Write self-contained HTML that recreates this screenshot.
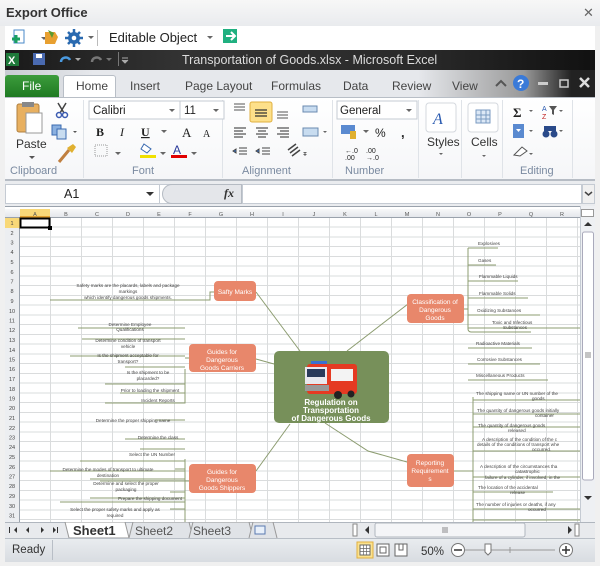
<!DOCTYPE html>
<html><head><style>
*{margin:0;padding:0;box-sizing:border-box}
body{width:600px;height:566px;overflow:hidden;background:#f0f0f0;font-family:"Liberation Sans",sans-serif;position:relative}
.a{position:absolute}
.t{position:absolute;white-space:nowrap}
.lbl{position:absolute;top:165px;font-size:11px;color:#7a8aa0}
.sep{position:absolute;top:100px;width:1px;height:78px;background:#dfe3e8}
.dd{position:absolute;font-size:7px;color:#555}
</style></head><body>
<!-- Export Office title -->
<div class="a" style="left:0;top:0;width:600px;height:26px;background:linear-gradient(#f7f7f7,#e9ebee)"></div>
<div class="t" style="left:6px;top:5px;font-size:13px;font-weight:bold;color:#333">Export Office</div>
<div class="t" style="left:583px;top:5px;font-size:13px;color:#666">✕</div>
<!-- toolbar -->
<div class="a" style="left:5px;top:26px;width:590px;height:24px;background:#fff"></div>
<svg class="a" style="left:10px;top:27px" width="230" height="22">
<rect x="4" y="3" width="10" height="13" fill="#fff" stroke="#4a8ac8"/><path d="M2 12h8M6 8v8" stroke="#1aa060" stroke-width="3"/>
<path d="M31 10l3 3 3-3" fill="#666"/>
<path d="M35 5h10l3 5-3 7h-10z" fill="#e8a030"/><path d="M38 3l6 3-2 5" fill="#5a9a30"/>
<circle cx="64" cy="11" r="6" fill="#2a6ab0"/><circle cx="64" cy="11" r="2.3" fill="#fff"/><path d="M64 2v18M55 11h18M58 5l12 12M70 5L58 17" stroke="#2a6ab0" stroke-width="2.5"/><circle cx="64" cy="11" r="2.3" fill="#fff"/>
<path d="M78 9l3 3 3-3" fill="#666"/><rect x="87" y="3" width="1" height="16" fill="#bbb"/>
<path d="M197 9l3 3 3-3" fill="#666"/>
<rect x="213" y="2" width="14" height="14" fill="#20b080"/><path d="M216 9h8M221 5l4 4-4 4" stroke="#fff" stroke-width="2" fill="none"/>
</svg>
<div class="t" style="left:109px;top:30px;font-size:13px;color:#222">Editable Object</div>
<!-- excel title -->
<div class="a" style="left:5px;top:50px;width:590px;height:20px;background:linear-gradient(90deg,#1a1a1a,#333 30%,#2a2a2a 70%,#111)"></div>
<svg class="a" style="left:6px;top:52px" width="130" height="16">
<rect x="0" y="1" width="13" height="13" fill="#1e7a3a"/><text x="2" y="12" font-size="11" font-weight="bold" fill="#fff" font-family="Liberation Sans">X</text>
<rect x="27" y="1" width="12" height="12" fill="#4a6ab0"/><rect x="30" y="2" width="6" height="4" fill="#fff"/>
<path d="M55 10c0-5 7-6 9-2" stroke="#4a9ae0" stroke-width="2.5" fill="none"/><path d="M69 6l3 3 3-3" fill="#aaa"/>
<path d="M86 10c0-5 7-6 9-2" stroke="#777" stroke-width="2.5" fill="none"/><path d="M100 6l3 3 3-3" fill="#777"/>
<rect x="112" y="0" width="1" height="14" fill="#777"/><path d="M116 6h6M116 8l3 3 3-3" stroke="#aaa" fill="#aaa"/>
</svg>
<div class="t" style="left:182px;top:53px;font-size:12.5px;color:#ddd">Transportation of Goods.xlsx  -  Microsoft Excel</div>
<!-- tabs row -->
<div class="a" style="left:5px;top:70px;width:590px;height:27px;background:linear-gradient(90deg,#c8ccd2,#e6e8ec 15%,#e6e8ec 70%,#999 88%,#222 96%)"></div>
<div class="a" style="left:5px;top:75px;width:54px;height:22px;background:linear-gradient(#3c9c3c,#1f7a22);border-radius:3px 3px 0 0"></div>
<div class="t" style="left:22px;top:79px;font-size:12px;color:#fff">File</div>
<div class="a" style="left:63px;top:75px;width:53px;height:23px;background:#fff;border:1px solid #b8bec6;border-bottom:none;border-radius:3px 3px 0 0"></div>
<div class="t" style="left:76px;top:79px;font-size:12px;color:#444">Home</div>
<div class="t" style="left:130px;top:79px;font-size:12px;color:#444">Insert</div>
<div class="t" style="left:185px;top:79px;font-size:12px;color:#444">Page Layout</div>
<div class="t" style="left:271px;top:79px;font-size:12px;color:#444">Formulas</div>
<div class="t" style="left:343px;top:79px;font-size:12px;color:#444">Data</div>
<div class="t" style="left:392px;top:79px;font-size:12px;color:#444">Review</div>
<div class="t" style="left:452px;top:79px;font-size:12px;color:#444">View</div>
<svg class="a" style="left:494px;top:74px" width="100" height="20"><path d="M2 12l5-5 5 5" stroke="#555" stroke-width="2" fill="none"/><circle cx="27" cy="9" r="8" fill="#3a7ad8"/><text x="23" y="14" font-size="12" font-weight="bold" fill="#fff" font-family="Liberation Sans">?</text><rect x="44" y="8" width="10" height="3" fill="#ccc"/><rect x="66" y="6" width="8" height="7" fill="none" stroke="#ccc" stroke-width="1.5"/><path d="M86 4l9 9M95 4l-9 9" stroke="#ddd" stroke-width="2.5"/></svg>
<!-- ribbon -->
<div class="a" style="left:5px;top:97px;width:590px;height:84px;background:linear-gradient(#fff,#f5f6f8);border-top:1px solid #b8bec6;border-bottom:2px solid #b6bcc4"></div>
<div class="sep" style="left:83px"></div><div class="sep" style="left:222px"></div><div class="sep" style="left:332px"></div><div class="sep" style="left:418px"></div><div class="sep" style="left:461px"></div><div class="sep" style="left:502px"></div><div class="sep" style="left:572px"></div>
<div class="lbl" style="left:10px">Clipboard</div><div class="lbl" style="left:132px">Font</div><div class="lbl" style="left:242px">Alignment</div><div class="lbl" style="left:345px">Number</div><div class="lbl" style="left:520px">Editing</div>
<svg class="a" style="left:5px;top:98px" width="590" height="70">
<!-- clipboard -->
<rect x="12" y="6" width="22" height="28" rx="2" fill="#e8b060" stroke="#b08040"/><rect x="17" y="4" width="12" height="5" fill="#888"/><rect x="21" y="15" width="16" height="20" fill="#fff" stroke="#999"/>
<path d="M53 5l6 10M61 5l-6 10" stroke="#444" stroke-width="1.5"/><circle cx="54" cy="17" r="2.5" fill="none" stroke="#3a5ab0" stroke-width="1.5"/><circle cx="60" cy="17" r="2.5" fill="none" stroke="#3a5ab0" stroke-width="1.5"/>
<rect x="47" y="27" width="9" height="10" fill="#8ab0e0" stroke="#3a6ab0"/><rect x="52" y="31" width="9" height="10" fill="#c8dcf0" stroke="#3a6ab0"/><path d="M68 33l2 2 2-2" fill="#555"/>
<path d="M54 64l10-12" stroke="#c08040" stroke-width="3"/><path d="M62 50l6-4 3 3-4 6z" fill="#e0b030"/>
<text x="11" y="50" font-size="12" fill="#333" font-family="Liberation Sans">Paste</text><path d="M24 58l3 3 3-3" fill="#555"/>
<!-- font -->
<rect x="84" y="3" width="91" height="18" fill="#fff" stroke="#c5cbd3"/><text x="88" y="16" font-size="11.5" fill="#222" font-family="Liberation Sans">Calibri</text><path d="M164 11l3 3 3-3" fill="#666"/>
<rect x="175" y="3" width="44" height="18" fill="#fff" stroke="#c5cbd3"/><text x="179" y="16" font-size="11.5" fill="#222" font-family="Liberation Sans">11</text><path d="M208 11l3 3 3-3" fill="#666"/>
<text x="91" y="38" font-size="12" font-weight="bold" fill="#222" font-family="Liberation Serif">B</text><text x="115" y="38" font-size="12" font-style="italic" fill="#222" font-family="Liberation Serif">I</text><text x="136" y="38" font-size="12" font-weight="bold" text-decoration="underline" fill="#222" font-family="Liberation Serif">U</text><path d="M156 32l3 3 3-3" fill="#666"/>
<text x="177" y="39" font-size="13" fill="#222" font-family="Liberation Serif">A</text><text x="198" y="39" font-size="10" fill="#222" font-family="Liberation Serif">A</text>
<rect x="90" y="47" width="12" height="11" fill="none" stroke="#999" stroke-dasharray="1,1"/><path d="M110 54l3 3 3-3" fill="#666"/>
<rect x="135" y="57" width="16" height="3" fill="#f0e000"/><path d="M139 46l7 5-4 4-6-4z" fill="#fff" stroke="#3a6ab0"/><path d="M155 54l3 3 3-3" fill="#666"/>
<rect x="166" y="57" width="16" height="3" fill="#e00000"/><text x="168" y="56" font-size="12" fill="#2a3a9a" font-family="Liberation Sans">A</text><path d="M186 54l3 3 3-3" fill="#666"/>
<!-- alignment -->
<path d="M229 6h11M229 9h11M229 12h11" stroke="#555"/><rect x="245" y="4" width="22" height="20" rx="2" fill="#fde08a" stroke="#e0b040"/><path d="M250 12h12M250 15h12M250 18h12" stroke="#333" stroke-width="1.3"/><path d="M272 14h11M272 17h11M272 20h11" stroke="#555"/>
<path d="M229 30h12M229 33h9M229 36h12M229 39h9" stroke="#555" stroke-width="1.3"/><path d="M251 30h12M253 33h8M251 36h12M253 39h8" stroke="#555" stroke-width="1.3"/><path d="M272 30h12M275 33h9M272 36h12M275 39h9" stroke="#555" stroke-width="1.3"/>
<path d="M234 50h8M234 53h8M234 56h8M228 53l3-2v4z" stroke="#444" fill="#3a7ad8"/><path d="M257 50h8M257 53h8M257 56h8M251 53l3-2v4z" stroke="#444" fill="#3a7ad8"/>
<path d="M283 52l8-6M285 55l8-6M287 58l8-6" stroke="#444" stroke-width="1.5"/><path d="M298 54l2 2 2-2" fill="#666"/>
<rect x="298" y="8" width="14" height="6" fill="#c8dcf0" stroke="#6a8ab0"/><rect x="298" y="30" width="15" height="8" fill="#c8dcf0" stroke="#6a8ab0"/><path d="M318 33l2 2 2-2" fill="#666"/><path d="M298 56l2 2 2-2" fill="#666"/>
<!-- number -->
<rect x="332" y="3" width="80" height="18" fill="#fff" stroke="#c5cbd3"/><text x="335" y="16" font-size="11.5" fill="#222" font-family="Liberation Sans">General</text><path d="M401 11l3 3 3-3" fill="#666"/>
<rect x="336" y="27" width="14" height="9" fill="#5a8ad0"/><rect x="345" y="33" width="6" height="8" fill="#e0b030"/><path d="M358 32l3 3 3-3" fill="#666"/>
<text x="370" y="39" font-size="12" fill="#222" font-family="Liberation Sans">%</text><text x="396" y="39" font-size="13" font-weight="bold" fill="#222" font-family="Liberation Sans">,</text>
<text x="340" y="55" font-size="7" fill="#222" font-family="Liberation Sans">←.0</text><text x="340" y="62" font-size="7" fill="#222" font-family="Liberation Sans">.00</text><text x="361" y="55" font-size="7" fill="#222" font-family="Liberation Sans">.00</text><text x="361" y="62" font-size="7" fill="#222" font-family="Liberation Sans">→.0</text>
<!-- styles cells -->
<rect x="421" y="5" width="30" height="29" rx="3" fill="#fff" stroke="#d4d8de"/><text x="428" y="26" font-size="16" font-style="italic" fill="#2a5ab0" font-family="Liberation Serif">A</text>
<text x="422" y="48" font-size="12" fill="#333" font-family="Liberation Sans">Styles</text><path d="M434 55l2 2 2-2" fill="#666"/>
<rect x="463" y="5" width="30" height="29" rx="3" fill="#fff" stroke="#d4d8de"/><rect x="471" y="12" width="14" height="13" fill="#dce8f6" stroke="#7a9ac0"/><path d="M471 17h14M471 21h14M476 12v13M481 12v13" stroke="#7a9ac0"/>
<text x="466" y="48" font-size="12" fill="#333" font-family="Liberation Sans">Cells</text><path d="M477 57l2 2 2-2" fill="#666"/>
<!-- editing -->
<text x="508" y="19" font-size="13" font-weight="bold" fill="#222" font-family="Liberation Serif">Σ</text><path d="M524 12l2 2 2-2" fill="#666"/>
<text x="537" y="13" font-size="7" fill="#2a5ab0" font-family="Liberation Sans">A</text><text x="537" y="21" font-size="7" fill="#c02020" font-family="Liberation Sans">Z</text><path d="M544 8h8l-3 4v5l-2-1v-4z" fill="#555"/><path d="M554 12l2 2 2-2" fill="#666"/>
<rect x="508" y="26" width="11" height="14" fill="#5a8ad0"/><path d="M511 31l2.5 3 2.5-3z" fill="#fff"/><path d="M524 32l2 2 2-2" fill="#666"/>
<circle cx="541" cy="36" r="3.5" fill="#2a4a8a"/><circle cx="549" cy="36" r="3.5" fill="#2a4a8a"/><rect x="539" y="28" width="12" height="5" fill="#2a4a8a"/><path d="M554 32l2 2 2-2" fill="#666"/>
<path d="M509 57l8-8 5 4-7 5z" fill="#fff" stroke="#555"/><path d="M524 55l2 2 2-2" fill="#666"/>
</svg>
<!-- formula bar -->
<div class="a" style="left:5px;top:181px;width:590px;height:25px;background:#eaecef"></div>
<div class="a" style="left:5px;top:184px;width:155px;height:20px;background:#fff;border:1px solid #c5cbd3"></div>
<div class="t" style="left:64px;top:187px;font-size:12.5px;color:#222">A1</div>
<svg class="a" style="left:145px;top:190px" width="10" height="8"><path d="M1 2l4 4 4-4z" fill="#333"/></svg>
<div class="a" style="left:160px;top:184px;width:82px;height:20px;background:#fff;border-top:1px solid #c5cbd3;border-bottom:1px solid #c5cbd3"></div>
<div class="a" style="left:162px;top:184px;width:80px;height:20px;background:#e4e6ea;border-radius:10px 0 0 10px;border:1px solid #b5bbc3"></div>
<div class="t" style="left:224px;top:186px;font-size:12px;font-style:italic;font-weight:bold;font-family:'Liberation Serif',serif;color:#333">fx</div>
<div class="a" style="left:242px;top:184px;width:340px;height:20px;background:#fff;border:1px solid #c5cbd3"></div>
<div class="a" style="left:582px;top:184px;width:13px;height:20px;background:#f0f0f0;border:1px solid #c5cbd3"></div>
<svg class="a" style="left:584px;top:190px" width="10" height="8"><path d="M1 2l3.5 3 3.5-3" stroke="#444" stroke-width="1.5" fill="none"/></svg>
<!-- sheet -->
<div class="a" style="left:5px;top:206px;width:590px;height:316px;background:#fff;border-top:1px solid #9aa2ac"></div>
<div class="a" style="left:20px;top:218px;width:560px;height:304px;background-image:repeating-linear-gradient(90deg,transparent 0 30px,#dadcdd 30px 31px),repeating-linear-gradient(180deg,transparent 0 8.75px,#dadcdd 8.75px 9.75px)"></div>
<div class="a" style="left:5px;top:209px;width:575px;height:9px;background:linear-gradient(#f7f8f9,#e4e7eb);border-bottom:1px solid #9aa2ac"></div>
<div class="a" style="left:20px;top:209px;width:30px;height:9px;background:#f8d878;border-bottom:2px solid #e0a030"></div>
<div class="a" style="left:5px;top:218px;width:15px;height:304px;background:#eceef1;border-right:1px solid #9aa2ac"></div>
<div class="a" style="left:5px;top:218px;width:15px;height:10px;background:#f8d878"></div>
<svg class="a" style="left:0;top:209px" width="580" height="313" font-family="Liberation Sans">
<g font-size="5.5" fill="#555" text-anchor="middle">
<text x="35" y="7">A</text><text x="66" y="7">B</text><text x="97" y="7">C</text><text x="128" y="7">D</text><text x="159" y="7">E</text><text x="190" y="7">F</text><text x="221" y="7">G</text><text x="252" y="7">H</text><text x="283" y="7">I</text><text x="314" y="7">J</text><text x="345" y="7">K</text><text x="376" y="7">L</text><text x="407" y="7">M</text><text x="438" y="7">N</text><text x="469" y="7">O</text><text x="500" y="7">P</text><text x="531" y="7">Q</text><text x="562" y="7">R</text>
</g>
<g font-size="5.5" fill="#444" text-anchor="middle">
<text x="12" y="16">1</text><text x="12" y="26">2</text><text x="12" y="35.5">3</text><text x="12" y="45">4</text><text x="12" y="55">5</text><text x="12" y="65">6</text><text x="12" y="74.5">7</text><text x="12" y="84">8</text><text x="12" y="94">9</text><text x="12" y="104">10</text><text x="12" y="113.5">11</text><text x="12" y="123">12</text><text x="12" y="133">13</text><text x="12" y="143">14</text><text x="12" y="152.5">15</text><text x="12" y="162">16</text><text x="12" y="172">17</text><text x="12" y="182">18</text><text x="12" y="191.5">19</text><text x="12" y="201">20</text><text x="12" y="211">21</text><text x="12" y="221">22</text><text x="12" y="230.5">23</text><text x="12" y="240">24</text><text x="12" y="250">25</text><text x="12" y="260">26</text><text x="12" y="269.5">27</text><text x="12" y="279">28</text><text x="12" y="289">29</text><text x="12" y="299">30</text><text x="12" y="308.5">31</text>
</g>
<rect x="20.5" y="9.5" width="29" height="9" fill="none" stroke="#000" stroke-width="2"/><rect x="48" y="17" width="4" height="4" fill="#000"/>
<!-- connectors -->
<g stroke="#8c9c70" stroke-width="1" fill="none">
<path d="M256 83L300 142M256 150L274 155M325 214L368 242L407 253M256 262L290 215M347 142L408 95"/>
<path d="M214 83h-4v8H50M210 91"/>
<path d="M189 149h-4M185 160V194h-80M185 158h-60M185 147H70M185 130H82M185 119H78M185 175h-80M185 184H120M185 194H140"/>
<path d="M189 272h-4M185 250V315M185 252H80M185 262H50M185 270H90M185 293H60M185 272H100M185 289H90M185 283H170M185 230H125M185 211H155M185 240H140M185 260H175M185 300H170"/>
<path d="M464 100h4M468 39V120a3 3 0 0 0 3 3h60M468 39h30M468 56h28M468 72h50M468 89h60M468 106h72M468 119h120M468 139h64M468 155h72M468 171h80M468 180"/>
<path d="M454 262h4M473 188v127M473 191h110M473 205h110M473 218h110M473 242h110M473 268h110M473 283h80M473 300h110M473 311h110M458 262h15"/>
</g>
<!-- nodes -->
<rect x="214" y="72" width="42" height="20" rx="4" fill="#e8876b"/><text x="235" y="85" font-size="6.5" fill="#fff" text-anchor="middle">Safty Marks</text>
<rect x="189" y="135" width="67" height="28" rx="4" fill="#e8876b"/><g font-size="6.5" fill="#fff" text-anchor="middle"><text x="222" y="145">Guides for</text><text x="222" y="153">Dangerous</text><text x="222" y="161">Goods Carriers</text></g>
<rect x="407" y="85" width="57" height="29" rx="4" fill="#e8876b"/><g font-size="6.5" fill="#fff" text-anchor="middle"><text x="435" y="95">Classification of</text><text x="435" y="103">Dangerous</text><text x="435" y="111">Goods</text></g>
<rect x="189" y="255" width="67" height="29" rx="4" fill="#e8876b"/><g font-size="6.5" fill="#fff" text-anchor="middle"><text x="222" y="265">Guides for</text><text x="222" y="273">Dangerous</text><text x="222" y="281">Goods Shippers</text></g>
<rect x="407" y="245" width="47" height="33" rx="4" fill="#e8876b"/><g font-size="6.5" fill="#fff" text-anchor="middle"><text x="430" y="256">Reporting</text><text x="430" y="264">Requirement</text><text x="430" y="272">s</text></g>
<rect x="274" y="142" width="115" height="72" rx="5" fill="#77905a"/>
<g transform="translate(305,152)"><rect x="2" y="3" width="50" height="30" rx="3" fill="#e53a22"/><rect x="0" y="6" width="22" height="17" fill="#e8e8ee"/><rect x="2" y="8" width="18" height="8" fill="#2a3a5a"/><rect x="0" y="24" width="24" height="6" fill="#999"/><rect x="26" y="8" width="22" height="12" fill="#f3f3f3"/><circle cx="33" cy="34" r="4" fill="#222"/><circle cx="46" cy="33" r="3.5" fill="#222"/><rect x="6" y="0" width="16" height="3" fill="#3a70d0"/></g>
<g font-size="8" font-weight="bold" fill="#fff" text-anchor="middle"><text x="331" y="196">Regulation on</text><text x="331" y="204">Transportation</text><text x="331" y="212">of Dangerous Goods</text></g>
<!-- branch texts -->
<g font-size="4.6" fill="#444" text-anchor="middle">
<text x="128" y="78">Safety marks are the placards, labels and package</text><text x="128" y="84">markings</text><text x="128" y="90">which identify dangerous goods shipments.</text>
<text x="130" y="117">Determine Employee</text><text x="130" y="122">Qualifications</text>
<text x="128" y="133">Determine condition of transport</text><text x="128" y="139">vehicle</text>
<text x="128" y="148">Is the shipment acceptable for</text><text x="128" y="154">transport?</text>
<text x="148" y="165">Is the shipment to be</text><text x="148" y="171">placarded?</text>
<text x="150" y="183">Prior to loading the shipment</text>
<text x="158" y="193">Incident Reports</text>
<text x="133" y="213">Determine the proper shipping name</text>
<text x="158" y="230">Determine the class</text>
<text x="152" y="247">Select the UN Number</text>
<text x="108" y="262">Determine the modes of transport to ultimate</text><text x="108" y="268">destination</text>
<text x="126" y="276">Determine and select the proper</text><text x="126" y="282">packaging</text>
<text x="150" y="291">Prepare the shipping document</text>
<text x="115" y="302">Select the proper safety marks and apply as</text><text x="115" y="308">required</text>
</g>
<g font-size="4.6" fill="#444">
<text x="478" y="36">Explosives</text><text x="478" y="53">Gases</text><text x="479" y="69">Flammable Liquids</text><text x="479" y="86">Flammable Solids</text><text x="477" y="103">Oxidizing Substances</text><text x="492" y="115">Toxic and Infectious</text><text x="503" y="120">Substances</text><text x="476" y="136">Radioactive Materials</text><text x="477" y="152">Corrosive Substances</text><text x="476" y="168">Miscellaneous Products</text>
<text x="476" y="186">The shipping name or UN number of the</text><text x="532" y="191">goods</text>
<text x="477" y="203">The quantity of dangerous goods initially</text><text x="535" y="208">container</text>
<text x="478" y="218">The quantity of dangerous goods</text><text x="508" y="223">released</text>
<text x="482" y="232">A description of the condition of the c</text><text x="477" y="237">details of the conditions of transport whe</text><text x="532" y="242">occurred.</text>
<text x="480" y="259">A description of the circumstances tha</text><text x="515" y="264">catastrophic</text><text x="485" y="270">failure of a cylinder, if involved, in the</text>
<text x="478" y="280">The location of the accidental</text><text x="510" y="285">release</text>
<text x="476" y="297">The number of injuries or deaths, if any</text><text x="528" y="302">occurred</text>
</g>
</svg>
<!-- vertical scrollbar -->
<div class="a" style="left:580px;top:206px;width:15px;height:316px;background:#eef0f3;border-left:1px solid #c5cbd3"></div>
<div class="a" style="left:581px;top:209px;width:13px;height:8px;background:#fff;border:1px solid #999"></div>
<svg class="a" style="left:582px;top:218px" width="12" height="300"><path d="M2 8l4-4 4 4z" fill="#333"/><rect x="0.5" y="14" width="11" height="248" rx="2" fill="#fff" stroke="#aab"/><path d="M3 135h6M3 137h6M3 139h6" stroke="#888"/><path d="M2 278l4 4 4-4z" fill="#333"/></svg>
<!-- sheet tabs -->
<div class="a" style="left:5px;top:522px;width:590px;height:16px;background:#e8eaed;border-top:1px solid #b0b6be"></div>
<svg class="a" style="left:5px;top:522px" width="590" height="16" font-family="Liberation Sans">
<g fill="#333"><rect x="4" y="5" width="1" height="6"/><path d="M9 8l3-3v6z"/><path d="M21 8l3-3v6z"/><path d="M36 5l3 3-3 3z"/><path d="M48 5l3 3-3 3z"/><rect x="52" y="5" width="1" height="6"/></g>
<path d="M60 0h60l4 16H64z" fill="#fff" stroke="#999"/>
<text x="68" y="13" font-size="13" font-weight="bold" fill="#333">Sheet1</text>
<path d="M124 16l4-16h56l4 16" fill="#e0e3e7" stroke="#999"/><text x="130" y="13" font-size="12" fill="#555">Sheet2</text>
<path d="M184 16l4-16h56l4 16" fill="#e0e3e7" stroke="#999"/><text x="188" y="13" font-size="12" fill="#555">Sheet3</text>
<path d="M244 16l4-16h20l4 16" fill="#e0e3e7" stroke="#999"/><rect x="250" y="4" width="10" height="8" fill="#e8f0fa" stroke="#5a7ab0"/>
<rect x="348" y="2" width="4" height="12" fill="#fff" stroke="#888"/><path d="M360 8l4-4v8z" fill="#333"/>
<rect x="370" y="1" width="150" height="14" rx="2" fill="#f4f5f7" stroke="#b0b6be"/><path d="M438 5v6M440 5v6M442 5v6" stroke="#888"/>
<path d="M563 4l4 4-4 4z" fill="#333"/><rect x="570" y="2" width="4" height="12" fill="#fff" stroke="#888"/>
</svg>
<!-- status -->
<div class="a" style="left:5px;top:538px;width:590px;height:24px;background:linear-gradient(#e9ecef,#d8dce1);border-top:1px solid #b8bec6"></div>
<div class="t" style="left:12px;top:544px;font-size:11.5px;color:#333">Ready</div>
<div class="a" style="left:52px;top:540px;width:1px;height:20px;background:#b8bec6"></div>
<svg class="a" style="left:355px;top:540px" width="240" height="22" font-family="Liberation Sans">
<rect x="2" y="2" width="16" height="16" fill="#fbe28e" stroke="#e0b040"/><rect x="5" y="5" width="10" height="10" fill="#fff" stroke="#666"/><path d="M5 8.5h10M5 11.5h10M8.5 5v10M11.5 5v10" stroke="#666" stroke-width=".7"/>
<rect x="22" y="4" width="12" height="12" fill="#fff" stroke="#666"/><rect x="25" y="7" width="6" height="6" fill="none" stroke="#666"/>
<rect x="40" y="4" width="12" height="12" fill="#fff" stroke="#666"/><path d="M44 4v6h4v-6" fill="none" stroke="#666"/>
<text x="66" y="15" font-size="11.5" fill="#333">50%</text>
<circle cx="103" cy="10" r="6.5" fill="#fff" stroke="#777"/><path d="M99 10h8" stroke="#333" stroke-width="1.5"/>
<path d="M110 10h90" stroke="#999"/><path d="M155 7v6" stroke="#999"/>
<path d="M130 4h6v8l-3 3-3-3z" fill="#fff" stroke="#777"/>
<circle cx="211" cy="10" r="6.5" fill="#fff" stroke="#777"/><path d="M207 10h8M211 6v8" stroke="#333" stroke-width="1.5"/>
</svg>
</body></html>
